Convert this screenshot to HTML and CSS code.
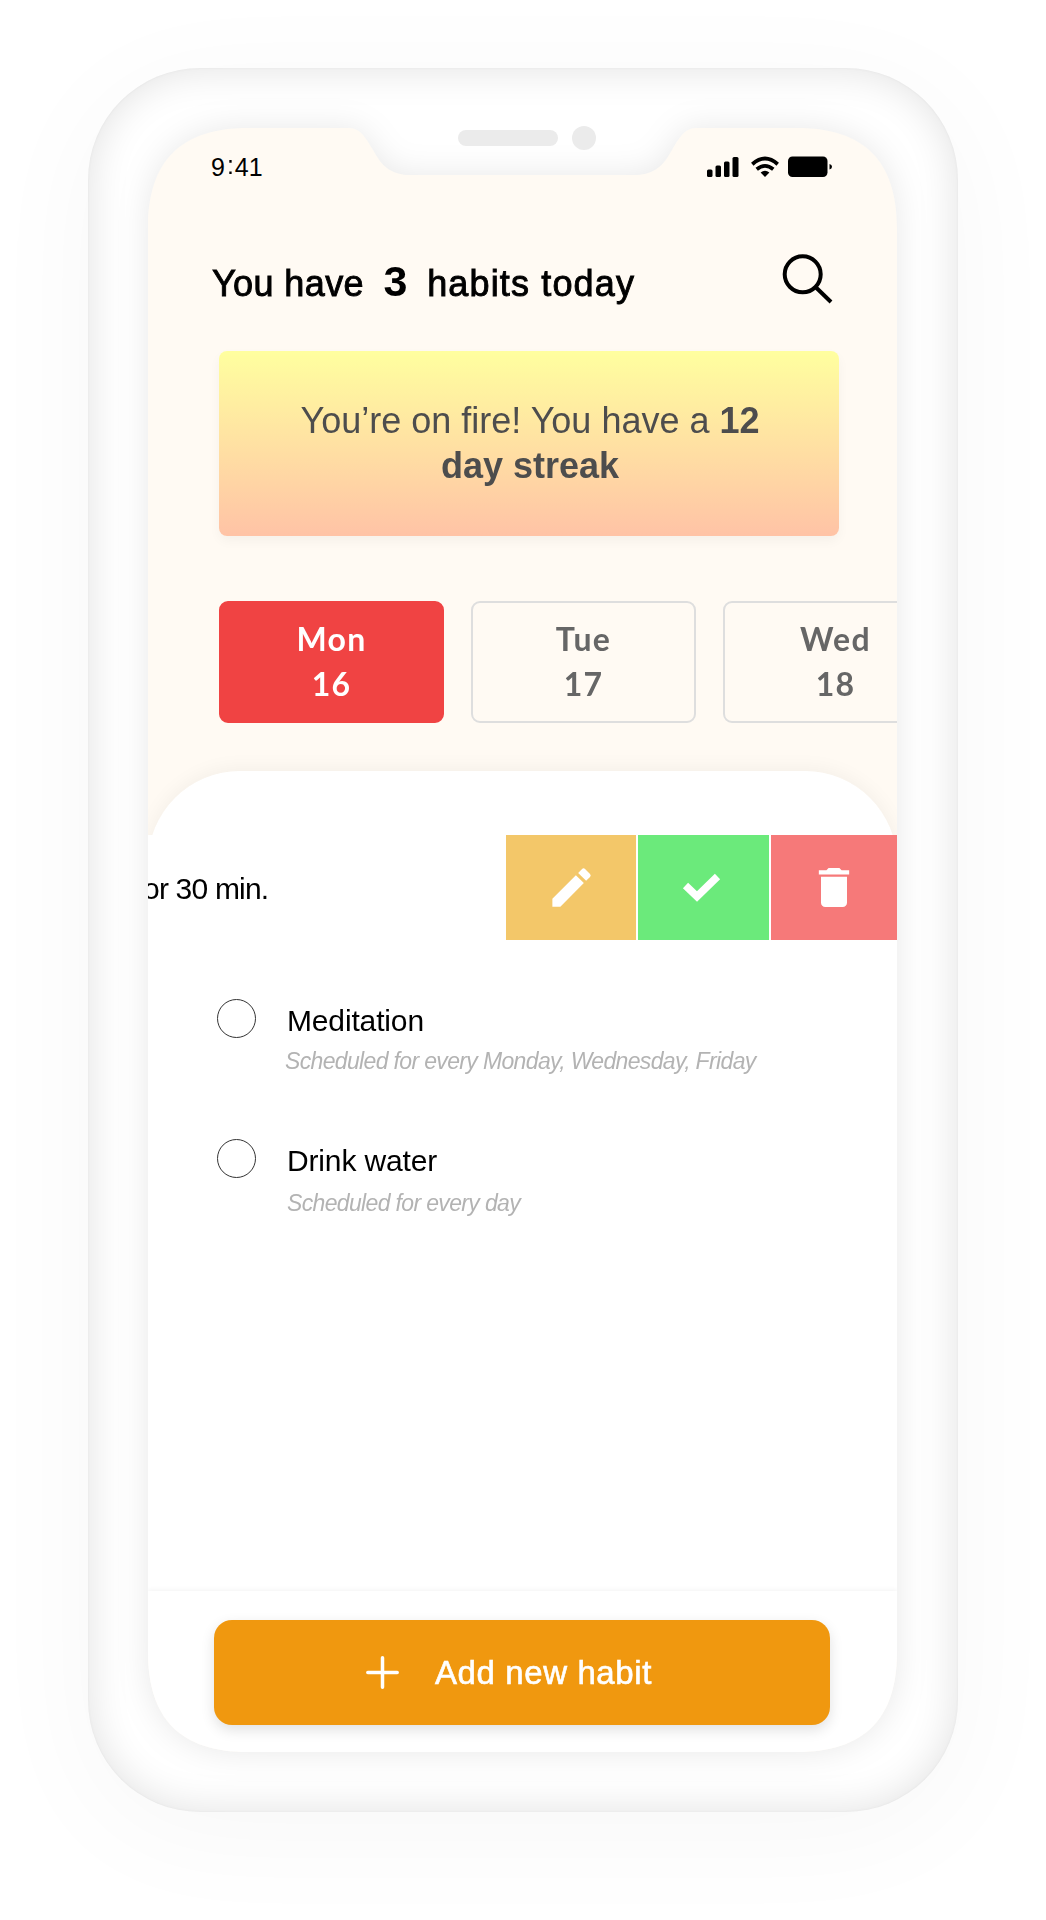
FILE: index.html
```
<!DOCTYPE html>
<html lang="en">
<head>
<meta charset="utf-8">
<title>Habits</title>
<link rel="stylesheet" href="styles.css">
</head>
<body>
<div class="phone">
  <div class="speaker"></div>
  <div class="camera"></div>
  <div class="screen-shadow">
    <main class="screen">
      <div class="status">
        <span class="time">9<span class="colon">:</span>41</span>
        <svg class="status-icons" width="126" height="22" viewBox="0 0 126 22">
          <rect x="0" y="13.500" width="5.500" height="7.500" rx="1.500"/>
          <rect x="8.500" y="9.500" width="5.500" height="11.500" rx="1.500"/>
          <rect x="17" y="5.500" width="5.500" height="15.500" rx="1.500"/>
          <rect x="25.500" y="1" width="6" height="20" rx="1.500"/>
          <g fill="none" stroke="#000" stroke-width="3.800">
            <path d="M45.300 8.200Q58 -3 70.700 8.200"/>
            <path d="M49.700 13.200Q58 6.500 66.300 13.200"/>
          </g>
          <path d="M53.600 16.600Q58 13 62.400 16.600L58 21Z"/>
          <rect x="81" y="0.500" width="39.500" height="20.500" rx="4.500"/>
          <path d="M122.500 8Q125 8.500 125 10.800T122.500 13.500Z"/>
        </svg>
      </div>
      <header class="header">
        <h1 class="title">You have <b class="count">3</b> <span class="title-end">habits today</span></h1>
        <svg class="search" width="52" height="52" viewBox="0 0 52 52" fill="none" stroke="#000" stroke-width="4">
          <circle cx="21.700" cy="21.300" r="18"/>
          <path d="M34.500 34L50 49"/>
        </svg>
      </header>
      <section class="banner">
        <p class="streak">You’re on fire! You have a <b>12<br>day streak</b></p>
      </section>
      <nav class="days">
        <div class="day day-active"><span>Mon</span><span>16</span></div>
        <div class="day"><span>Tue</span><span>17</span></div>
        <div class="day"><span>Wed</span><span>18</span></div>
      </nav>
      <section class="sheet">
        <div class="swipe-row">
          <span class="swipe-text">or 30 min.</span>
          <div class="actions">
            <div class="action edit">
              <svg width="51" height="51" viewBox="0 0 24 24"><path d="M3 17.250V21h3.750L17.810 9.940l-3.750-3.750L3 17.250zM20.710 7.040a1 1 0 0 0 0-1.410l-2.340-2.340a1 1 0 0 0-1.410 0l-1.830 1.830 3.750 3.750 1.830-1.830z"/></svg>
            </div>
            <div class="action done">
              <svg width="40" height="32" viewBox="0 0 40 32" fill="none" stroke="#fff" stroke-width="7.500"><path d="M3.500 13.500L15 24.500L35.500 4.500"/></svg>
            </div>
            <div class="action remove">
              <svg width="52" height="53" viewBox="0 0 24 24"><path d="M6 19c0 1.100.9 2 2 2h8c1.100 0 2-.9 2-2V7H6v12zM19 4h-3.500l-1-1h-5l-1 1H5v2h14V4z"/></svg>
            </div>
          </div>
        </div>
        <div class="habit">
          <i class="check"></i>
          <div class="habit-body">
            <div class="habit-name">Meditation</div>
            <div class="habit-note note-long">Scheduled for every Monday, Wednesday, Friday</div>
          </div>
        </div>
        <div class="habit">
          <i class="check"></i>
          <div class="habit-body">
            <div class="habit-name">Drink water</div>
            <div class="habit-note note-short">Scheduled for every day</div>
          </div>
        </div>
      </section>
      <footer class="footer">
        <button class="add">
          <svg width="33" height="33" viewBox="0 0 33 33" stroke="#fff" stroke-width="3.500" stroke-linecap="round"><path d="M16.500 1.800v29.400M1.800 16.500h29.400"/></svg>
          <span>Add new habit</span>
        </button>
      </footer>
    </main>
  </div>
</div>
</body>
</html>
```
FILE: styles.css
```
* { box-sizing: border-box; }

body {
  margin: 0;
  height: 1920px;
  padding: 68px 88px;
  overflow: hidden;
  background: #fff;
  font-family: "Liberation Sans", Arial, sans-serif;
  color: #000;
}

.phone {
  position: relative;
  width: 870px;
  height: 1744px;
  padding: 60px;
  border-radius: 112px;
  background: #fff;
  box-shadow: 0 20px 120px rgba(0, 0, 0, .035), inset 0 0 42px rgba(0, 0, 0, .12), inset 0 0 3px rgba(0, 0, 0, .05);
}

.speaker, .camera {
  position: absolute;
  z-index: 1;
  background: #ebebeb;
}
.speaker { left: 370px; top: 62px; width: 100px; height: 16px; border-radius: 8px; }
.camera { left: 484px; top: 58px; width: 24px; height: 24px; border-radius: 50%; }

.screen-shadow { filter: drop-shadow(0 0 16px rgba(0, 0, 0, .09)); }

.screen {
  display: flex;
  flex-direction: column;
  width: 749px;
  height: 1624px;
  background: #fffaf3;
  clip-path: path("M0 100C0 33 33 0 100 0H201C213 0 219 12 225 22S238 47 262 47H486C511 47 518 32 524 22S536 0 548 0H649C716 0 749 33 749 100V1524C749 1591 716 1624 649 1624H100C33 1624 0 1591 0 1524Z");
}

.status {
  display: flex;
  justify-content: space-between;
  height: 123px;
  padding: 25px 64px 0 63px;
}
.time { font-size: 25px; line-height: 28px; }
.colon { position: relative; top: -2px; margin: 0 1px 0 2px; }
.status-icons { margin-top: 3px; }

.header {
  display: flex;
  justify-content: space-between;
  height: 100px;
  padding: 2px 64px 0 64px;
}
.title {
  margin: 6px 0 0;
  font-size: 36px;
  line-height: 44px;
  font-weight: 400;
  letter-spacing: .4px;
  white-space: pre;
  -webkit-text-stroke: .9px #000;
}
.title-end { letter-spacing: 1.150px; }
.count { margin: 0 9px; font-size: 43px; -webkit-text-stroke: 0; }

.banner {
  width: 620px;
  height: 185px;
  margin-left: 71px;
  padding-top: 47px;
  border-radius: 8px;
  background: linear-gradient(#ffff9f, #ffc3a6);
  box-shadow: 0 5px 12px rgba(0, 0, 0, .04);
}
.streak {
  margin: 0 0 0 2px;
  font-size: 36px;
  line-height: 45px;
  text-align: center;
  color: #4d4d4d;
  white-space: nowrap;
}

.days {
  display: flex;
  gap: 27px;
  height: 235px;
  padding: 65px 0 0 71px;
}
.day {
  display: flex;
  flex: 0 0 225px;
  flex-direction: column;
  align-items: center;
  height: 122px;
  padding-top: 13px;
  border: 2px solid #dedede;
  border-radius: 9px;
  font: 700 32px/45px Lato, sans-serif;
  letter-spacing: 1.300px;
  color: #666;
}
.day-active { background: #f04343; border-color: #f04343; color: #fff; }

.sheet {
  flex: 1;
  padding-top: 64px;
  border-radius: 92px 92px 0 0;
  background: #fff;
  box-shadow: 0 -2px 20px rgba(0, 0, 0, .05);
}

.swipe-row {
  display: flex;
  justify-content: space-between;
  height: 105px;
  background: #fff;
}
.swipe-text {
  margin: 34px 0 0 -5px;
  font-size: 30px;
  line-height: 40px;
  letter-spacing: -.8px;
  white-space: nowrap;
}
.actions { display: flex; gap: 2px; width: 391px; overflow: hidden; }
.action {
  display: flex;
  flex: 0 0 130.300px;
  align-items: center;
  justify-content: center;
  fill: #fff;
}
.edit { background: #f3c769; }
.done { padding-right: 2px; background: #6bea7b; }
.remove { padding-right: 3px; background: #f67979; }

.habit {
  display: flex;
  height: 140px;
  padding: 59px 0 0 69px;
}
.check {
  width: 39px;
  height: 39px;
  border: 1.500px solid #333;
  border-radius: 50%;
}
.habit-body { padding-left: 31px; }
.habit-name { font-size: 30px; line-height: 43px; letter-spacing: -.15px; white-space: nowrap; }
.habit-note { font-size: 23px; line-height: 30px; letter-spacing: -.650px; font-style: italic; color: #b3b3b3; white-space: nowrap; }
.note-long { margin: 4px 0 0 -2px; }
.note-short { margin: 6px 0 0; }

.footer {
  height: 161px;
  padding: 29px 66px 0;
  background: #fff;
  box-shadow: 0 -1px 5px rgba(0, 0, 0, .05);
}
.add {
  display: flex;
  align-items: center;
  gap: 36px;
  width: 616px;
  height: 105px;
  padding: 0 0 0 152px;
  border: 0;
  border-radius: 18px;
  background: #f0980f;
  box-shadow: 0 5px 14px rgba(0, 0, 0, .12);
  font: 400 33px/40px "Liberation Sans", Arial, sans-serif;
  letter-spacing: .6px;
  color: #fff;
  -webkit-text-stroke: .6px #fff;
}
```
